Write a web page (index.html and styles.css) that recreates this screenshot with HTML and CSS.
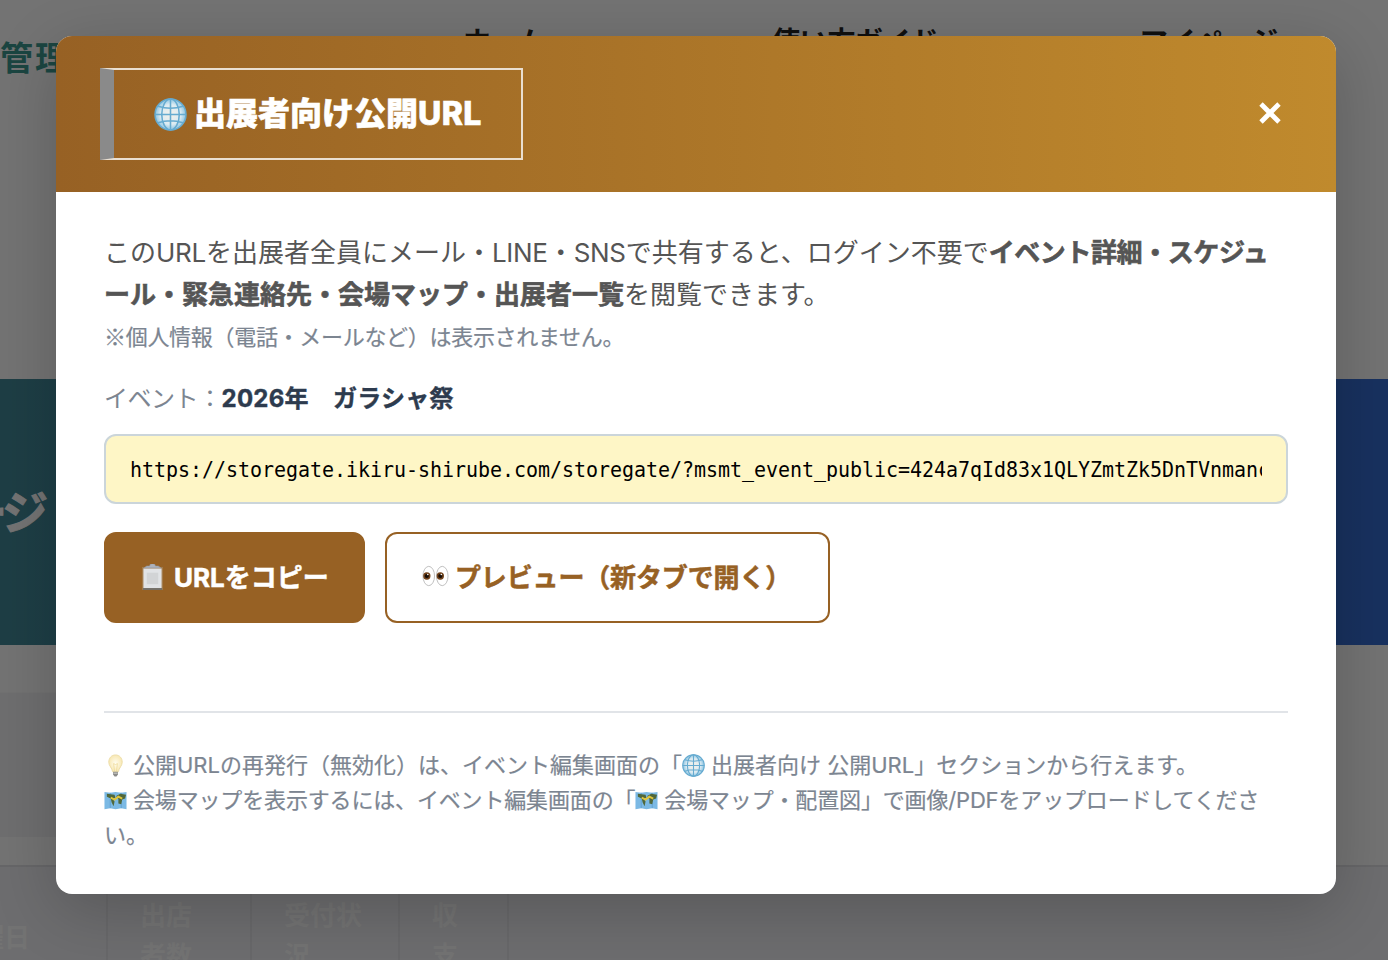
FILE: index.html
```html
<!DOCTYPE html>
<html lang="ja">
<head>
<meta charset="utf-8">
<title>出展者向け公開URL</title>
<link rel="stylesheet" href="styles.css">
</head>
<body>
<svg class="defs" width="0" height="0" aria-hidden="true">
  <defs>
    <radialGradient id="gl"><stop offset="0" stop-color="#f4f1ea"/><stop offset=".65" stop-color="#dcebf2"/><stop offset="1" stop-color="#8cc4e2"/></radialGradient>
    <radialGradient id="bl"><stop offset="0" stop-color="#fffdf0"/><stop offset="1" stop-color="#f8e8b4"/></radialGradient>
    <symbol id="globe" viewBox="0 0 32 32">
      <circle cx="16" cy="16" r="15" fill="url(#gl)"/>
      <g fill="none" stroke="#66abd0" stroke-width="1.500">
        <circle cx="16" cy="16" r="15"/><ellipse cx="16" cy="16" rx="8.500" ry="15"/>
        <path d="M16 1v30M1 16h30M4 8q12 4 24 0M4 24q12-4 24 0"/>
      </g>
    </symbol>
    <symbol id="bulb" viewBox="0 0 24 24">
      <path d="M12 1C7.500 1 5 4.500 5 8.500c0 4 3.500 6 4 10h6c.5-4 4-6 4-10C19 4.500 16.500 1 12 1z" fill="url(#bl)" stroke="#ecdca6"/>
      <path d="M11 18l-1-8 2 1 2-1-1 8" fill="none" stroke="#eedb98" stroke-width=".8"/>
      <path d="M9.500 18.500h5v3l-1.500 2h-2l-1.500-2z" fill="#8b8b88"/><path d="M10 20h4" stroke="#d2d2ce"/>
    </symbol>
    <symbol id="map" viewBox="0 0 24 20">
      <path d="M.5 1l6 1 5.500-1 6 1 5.500-1v18l-5.500-1-6 1-5.500-1-6 1z" fill="#7bb9e4"/>
      <path d="M6.500 2v16M18 2v16" stroke="#62a1d1"/>
      <path d="M3 3l8 1 1 3-3 1 2 3-1 5-2-4-1-4-4-2zM13 5l4-2 6 1-1 4-3 1-1 5-3-1v-5l-2-1z" fill="#50683b"/>
      <path d="M7 7l4 2 4-3 4 2" fill="none" stroke="#dfc53c" stroke-width="2"/>
    </symbol>
    <symbol id="clip" viewBox="0 0 24 28">
      <path d="M1 3h22v24H1z" fill="#a17a4b"/><path d="M2.500 4.500h19v21h-19z" fill="#e1e3e6"/>
      <path d="M6 9h12v12H6z" fill="#d2d4d6"/><path d="M2 25h20v2H2z" fill="#73706a"/>
      <path d="M3 4h18l-3-2h-3a3 2.500 0 0 0-6 0H6z" fill="#aeb2bb" stroke="#8f939c" stroke-width=".6"/>
    </symbol>
    <symbol id="eyes" viewBox="0 0 28 22">
      <g fill="#fff" stroke="#bdbdbd"><ellipse cx="7" cy="11" rx="6" ry="10"/><ellipse cx="21" cy="11" rx="6" ry="10"/></g>
      <circle cx="5" cy="11" r="3.800" fill="#70421b"/><circle cx="19" cy="11" r="3.800" fill="#70421b"/>
      <circle cx="5" cy="11" r="2.200" fill="#160c06"/><circle cx="19" cy="11" r="2.200" fill="#160c06"/>
      <circle cx="6" cy="9.500" r=".8" fill="#fff"/><circle cx="20" cy="9.500" r=".8" fill="#fff"/>
    </symbol>
  </defs>
</svg>
<div class="page">
  <header class="site">
    <div class="logo">管理</div>
    <nav class="nav"><span>ホーム</span><span>使い方ガイド</span><span>マイページ</span></nav>
  </header>
  <section class="hero"><span class="hero-title">ージ</span></section>
  <section class="summary"></section>
  <div class="thead">
    <div class="th">曜日</div>
    <div class="th">出店<br>者数</div>
    <div class="th">受付状<br>況</div>
    <div class="th">収<br>支</div>
  </div>
</div>
<div class="overlay">
  <div class="modal">
    <div class="modal-head">
      <h2 class="title"><svg class="i-title"><use href="#globe"/></svg><span>出展者向け公開<span class="lat-title">URL</span></span></h2>
      <button class="close" aria-label="閉じる"><svg width="22" height="22" viewBox="0 0 22 22"><path d="M2 2l18 18M20 2L2 20" stroke="#fff" stroke-width="4.800"/></svg></button>
    </div>
    <div class="modal-body">
      <p class="lead">この<span class="latin">URL</span>を出展者全員にメール・<span class="latin">LINE</span>・<span class="latin">SNS</span>で共有すると、ログイン不要で<b><span class="tight">イベント詳細・スケジュ</span><br>ール・緊急連絡先・会場マップ・出展者一覧</b>を閲覧できます。<br><small>※個人情報（電話・メールなど）は表示されません。</small></p>
      <p class="event"><span class="label">イベント：</span><b>2026年　ガラシャ祭</b></p>
      <div class="url"><div class="url-text">https://storegate.ikiru-shirube.com/storegate/?msmt_event_public=424a7qId83x1QLYZmtZk5DnTVnmanc</div></div>
      <div class="actions">
        <button class="btn solid"><svg class="i-clip"><use href="#clip"/></svg><span>URLをコピー</span></button>
        <button class="btn outline"><svg class="i-eyes"><use href="#eyes"/></svg><span>プレビュー（新タブで開く）</span></button>
      </div>
      <div class="notes">
        <div class="n1"><svg class="i-note"><use href="#bulb"/></svg>公開URLの再発行（無効化）は、イベント編集画面の「<svg class="i-note"><use href="#globe"/></svg>出展者向け 公開URL」セクションから行えます。</div>
        <div class="n2"><svg class="i-note"><use href="#map"/></svg>会場マップを表示するには、イベント編集画面の「<svg class="i-note"><use href="#map"/></svg>会場マップ・配置図」で画像/PDFをアップロードしてくださ</div>
        <div>い。</div>
      </div>
    </div>
  </div>
</div>
</body>
</html>
```
FILE: styles.css
```css
* { box-sizing: border-box; }
html, body { margin: 0; height: 960px; overflow: hidden; }
body { position: relative; font-family: Inter, "Noto Sans CJK JP", sans-serif; background: #fff; }
.defs { position: absolute; }
p, h2 { margin: 0; }
button { font: inherit; margin: 0; cursor: pointer; }

.page { width: 1388px; height: 960px; overflow: hidden; white-space: nowrap; }
.site { height: 379px; display: flex; }
.logo { width: 463px; padding-top: 34px; font-size: 33px; line-height: 48px; font-weight: 700; letter-spacing: 2px; color: #3d9a90; }
.nav { display: grid; grid-template-columns: 309px 368px auto; padding-top: 22px; font-size: 28px; line-height: 40px; font-weight: 700; letter-spacing: -.3px; color: #222; }
.hero { height: 266px; display: flex; align-items: center; background: linear-gradient(90deg, #438a99, #356dd3); }
.hero-title { margin-left: -39px; font-size: 46px; font-weight: 700; line-height: 60px; letter-spacing: -4px; color: #fff; -webkit-text-stroke: 1px #fff; }
.summary { width: 1000px; height: 145px; margin: 47px 0 28px; background: #f3f3f7; border-top: 1px solid #fbfbfb; }
.thead { display: flex; height: 160px; border-top: 2px solid #e2e2e6; background: #f1f1f5; color: #fff; font-size: 26px; font-weight: 700; line-height: 40px; }
.th { padding: 29px 32px; border-right: 2px solid #e6e6ea; }
.th:nth-child(1) { width: 108px; padding: 51px 0 0; text-indent: -22px; }
.th:nth-child(2) { width: 144px; }
.th:nth-child(3) { width: 148px; }
.th:nth-child(4) { width: 109px; }

.overlay { position: absolute; inset: 0; padding: 36px 52px 0 56px; background: rgba(0,0,0,.55); }
.modal { width: 1280px; height: 858px; border-radius: 16px; overflow: hidden; background: #fff; box-shadow: 0 16px 64px rgba(0,0,0,.2); }
.modal-head { height: 156px; display: flex; justify-content: space-between; align-items: flex-start; padding: 32px 55px 0 44px; background: linear-gradient(90deg, #976124, #c08a2d); }
.title { display: flex; align-items: center; gap: 7px; width: 423px; height: 92px; padding-left: 40px; border: 2px solid #eadfd1; border-left: 14px solid #8a8a8a; color: #fff; font-size: 32px; font-weight: 800; line-height: 48px; white-space: nowrap; -webkit-text-stroke: .6px #fff; }
.lat-title { letter-spacing: .4px; }
.i-title { width: 33px; height: 33px; flex: none; }
.close { display: flex; margin-top: 34px; padding: 0; border: 0; background: none; }
.modal-body { padding: 40px 48px 0; white-space: nowrap; }
.lead { height: 125px; font-size: 26px; line-height: 41.600px; color: #555; }
.lead b { -webkit-text-stroke: .6px #555; }
.latin { letter-spacing: -.3px; }
.tight { letter-spacing: -.42px; }
.lead small { font-family: "Noto Sans CJK JP", sans-serif; font-size: 22px; color: #7c8591; letter-spacing: -.3px; -webkit-text-stroke: .2px #7c8591; }
.event { margin-top: 20px; height: 42px; font-size: 24px; line-height: 43px; color: #2d3b4e; }
.event b { letter-spacing: .26px; -webkit-text-stroke: .4px #2d3b4e; }
.label { color: #7c8591; letter-spacing: -.5px; }
.url { height: 70px; margin-top: 15px; padding: 0 24px; border: 2px solid #cbd5da; border-radius: 12px; background: #fef6c6; }
.url-text { overflow: hidden; font: 20px/66px "DejaVu Sans Mono", monospace; letter-spacing: -.041px; color: #000; transform: scaleY(1.08); }
.actions { display: flex; gap: 20px; margin-top: 28px; }
.btn { display: flex; align-items: center; height: 91px; padding: 0 0 4px; border: 2px solid #976124; border-radius: 12px; font-size: 26px; font-weight: 700; white-space: nowrap; -webkit-text-stroke: .5px currentColor; }
.solid { width: 261px; padding-left: 35px; gap: 10px; background: #976124; color: #fff; }
.outline { width: 445px; padding-left: 35px; gap: 6px; background: #fff; color: #976124; letter-spacing: -.15px; }
.i-clip { width: 23px; height: 27px; flex: none; margin-top: 4px; }
.i-eyes { width: 27px; height: 22px; flex: none; }
.notes { margin-top: 88px; padding-top: 35px; border-top: 2px solid #e1e4e8; font-size: 22px; line-height: 35.200px; color: #7c8591; -webkit-text-stroke: .2px #7c8591; }
.n1 { letter-spacing: 0; }
.n2 { letter-spacing: -.16px; }
.i-note { width: 23px; height: 23px; margin-right: 6px; vertical-align: -4px; }
```
